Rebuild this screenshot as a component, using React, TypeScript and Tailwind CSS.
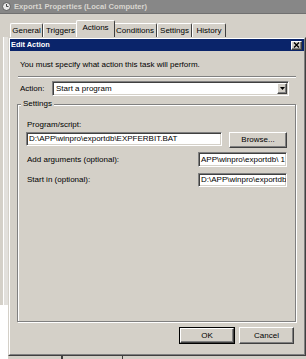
import React from "react";

const raised =
  "border border-t-white border-l-white border-r-[#404040] border-b-[#404040] shadow-[inset_-1px_-1px_0_#808080] bg-[#d4d0c8]";
const sunken =
  "border border-t-[#808080] border-l-[#808080] border-r-white border-b-white shadow-[inset_1px_1px_0_#404040,inset_-1px_-1px_0_#d4d0c8] bg-white";

const ClockIcon = () => (
  <svg width="9" height="9" viewBox="0 0 9 9">
    <circle cx="4.5" cy="4.5" r="4" fill="#e8e8e8" stroke="#5a5a5a" strokeWidth="1" />
    <path d="M4.5 2v2.5h2" stroke="#333" strokeWidth="0.9" fill="none" />
  </svg>
);

const tabs = [
  { label: "General", w: "w-[33px]" },
  { label: "Triggers", w: "w-[35px]" },
  { label: "Actions", w: "w-[39px]", active: true },
  { label: "Conditions", w: "w-[44px]" },
  { label: "Settings", w: "w-[35px]" },
  { label: "History", w: "w-[34px]" },
];

const Tab = ({ label, w, active }: { label: string; w: string; active?: boolean }) => (
  <div
    className={
      active
        ? `${w} h-[17px] -mx-[2px] relative z-10 bg-[#d4d0c8] border-t border-l border-r border-t-white border-l-white border-r-[#404040] rounded-t-[2px] flex justify-center pt-[2px]`
        : `${w} h-[14px] border-t border-l border-r border-t-white border-l-white border-r-[#404040] rounded-t-[2px] flex justify-center pt-[2px]`
    }
  >
    <span className="leading-[10px] whitespace-nowrap">{label}</span>
  </div>
);

export default function App() {
  return (
    <div className="w-[306px] h-[359px] overflow-hidden bg-[#d4d0c8] flex flex-col text-black font-['Liberation_Sans',Arial,sans-serif] text-[8px] leading-[10px]">
      {/* Properties window title */}
      <div className="h-[14px] shrink-0 bg-[#878787] flex items-center pl-[2px] gap-[3px] border-b border-[#707070]">
        <ClockIcon />
        <span className="text-[7.6px] font-bold text-[#d8d6d0] whitespace-nowrap">
          Export1 Properties (Local Computer)
        </span>
      </div>

      {/* Tabs */}
      <div className="h-[23px] shrink-0 flex items-end pl-[10px]">
        {tabs.map((t) => (
          <Tab key={t.label} {...t} />
        ))}
      </div>

      {/* Tab page + Edit Action dialog */}
      <div className="h-[319px] shrink-0 flex">
        <div className="w-[8px] shrink-0 flex flex-col">
          <div className="h-[268px] flex">
            <div className="w-[3px] bg-[#d4d0c8]" />
            <div className="w-[1px] bg-white" />
            <div className="flex-1 bg-[#e2e0dc]" />
          </div>
          <div className="flex-1 bg-white" />
        </div>

        <div className="w-[298px] h-[319px] shrink-0 border border-t-[#d4d0c8] border-l-[#d4d0c8] border-r-[#404040] border-b-[#404040]">
          <div className="h-full border border-t-white border-l-white border-r-[#808080] border-b-[#808080] flex flex-col">
            {/* Title bar */}
            <div className="h-[12px] shrink-0 bg-[#0a246a] flex items-center justify-between pl-[1px] pr-[2px]">
              <span className="text-white font-bold text-[7.4px] whitespace-nowrap">Edit Action</span>
              <div className={`${raised} w-[11px] h-[9px] flex items-center justify-center`}>
                <svg width="7" height="6" viewBox="0 0 7 6">
                  <path d="M1 0.5l5 5M6 0.5l-5 5" stroke="#000" strokeWidth="1.3" />
                </svg>
              </div>
            </div>

            <p className="mt-[8px] ml-[10px] h-[11px] leading-[11px] whitespace-nowrap">
              You must specify what action this task will perform.
            </p>

            <div className="mt-[6px] mx-[8px] h-[2px] border-t border-t-[#808080] border-b border-b-white" />

            {/* Action row */}
            <div className="mt-[3px] h-[15px] flex items-center ml-[10px]">
              <span className="w-[32px]">Action:</span>
              <div className={`${sunken} w-[237px] h-[15px] flex items-center pl-[3px] pr-[1px]`}>
                <span className="flex-1 whitespace-nowrap">Start a program</span>
                <div className={`${raised} w-[10px] h-[11px] flex items-center justify-center`}>
                  <svg width="5" height="3" viewBox="0 0 5 3">
                    <path d="M0 0h5L2.5 3z" fill="#000" />
                  </svg>
                </div>
              </div>
            </div>

            {/* Settings group */}
            <div className="mt-[8px] ml-[7px] w-[279px] h-[218px] shrink-0 relative border border-[#808080] shadow-[inset_1px_1px_0_#fff,1px_1px_0_#fff] flex flex-col">
              <span className="absolute -top-[6px] left-[3px] px-[2px] bg-[#d4d0c8] leading-[10px]">Settings</span>

              <p className="mt-[14px] ml-[9px] h-[11px] leading-[11px]">Program/script:</p>
              <div className="mt-[2px] ml-[8px] flex items-start">
                <div className={`${sunken} w-[196px] h-[14px] flex items-center pl-[2px] overflow-hidden whitespace-nowrap`}>
                  D:\APP\winpro\exportdb\EXPFERBIT.BAT
                </div>
                <button className={`${raised} ml-[7px] w-[58px] h-[16px] flex items-center justify-center`}>
                  Browse...
                </button>
              </div>

              <div className="mt-[4px] h-[15px] flex items-center">
                <span className="ml-[9px]">Add arguments (optional):</span>
                <div className={`${sunken} ml-auto mr-[8px] w-[89px] h-[15px] flex items-center pl-[2px] overflow-hidden whitespace-nowrap`}>
                  APP\winpro\exportdb\ 1
                </div>
              </div>

              <div className="mt-[6px] h-[14px] flex items-center">
                <span className="ml-[9px]">Start in (optional):</span>
                <div className={`${sunken} ml-auto mr-[8px] w-[89px] h-[14px] flex items-center pl-[2px] overflow-hidden whitespace-nowrap`}>
                  D:\APP\winpro\exportdb\
                </div>
              </div>
            </div>

            {/* Buttons */}
            <div className="mt-[5px] mr-[10px] flex justify-end gap-[4px]">
              <div className="w-[56px] h-[17px] border border-black">
                <button className={`${raised} w-full h-full flex items-center justify-center`}>OK</button>
              </div>
              <button className={`${raised} w-[55px] h-[17px] flex items-center justify-center`}>Cancel</button>
            </div>
          </div>
        </div>
      </div>

      {/* Underlying window below dialog */}
      <div className="flex-1 flex">
        <div className="w-[8px] bg-white" />
        <div className="ml-[53px] w-[62px] border-l-2 border-l-[#404040] border-r border-r-[#404040]" />
      </div>
    </div>
  );
}
